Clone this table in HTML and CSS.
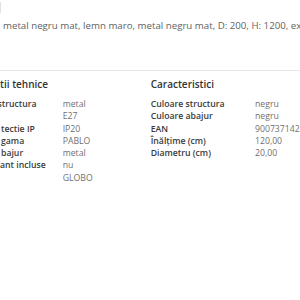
FILE: index.html
```html
<!DOCTYPE html>
<html lang="ro">
<head>
<meta charset="utf-8">
<link rel="stylesheet" href="styles.css">
</head>
<body>
<div class="top">
  <span class="edge"></span>
  <p class="desc">metal negru mat, lemn maro, metal negru mat, D: 200, H: 1200, exterior</p>
</div>
<div class="specs">
  <section class="col col-left">
    <h3 class="title title-cut">tii tehnice</h3>
    <dl class="table table-left">
      <dt class="cut">structura</dt><dd>metal</dd>
      <dt></dt><dd>E27</dd>
      <dt>tectie IP</dt><dd>IP20</dd>
      <dt>gama</dt><dd>PABLO</dd>
      <dt>bajur</dt><dd>metal</dd>
      <dt class="cut-small">ant incluse</dt><dd>nu</dd>
      <dt></dt><dd>GLOBO</dd>
    </dl>
  </section>
  <section class="col col-right">
    <h3 class="title">Caracteristici</h3>
    <dl class="table table-right">
      <dt>Culoare structura</dt><dd>negru</dd>
      <dt>Culoare abajur</dt><dd>negru</dd>
      <dt>EAN</dt><dd>9007371420558</dd>
      <dt>Înălțime (cm)</dt><dd>120,00</dd>
      <dt>Diametru (cm)</dt><dd>20,00</dd>
    </dl>
  </section>
</div>
</body>
</html>
```
FILE: styles.css
```css
html, body {
  margin: 0;
  padding: 0;
  background: #fff;
  overflow: hidden;
}
body {
  font-family: "Open Sans", "Noto Sans", sans-serif;
  width: 300px;
  height: 300px;
  overflow: hidden;
}
.top {
  position: relative;
  height: 70px;
  border-bottom: 1px solid #e8e8e8;
}
.edge {
  position: absolute;
  left: 0;
  top: 2px;
  height: 11px;
  border-left: 1px solid #e2e2e2;
}
.desc {
  margin: 0;
  padding: 19px 0 0 3px;
  font-size: 9.7px;
  line-height: 14px;
  color: #5f5f5f;
  white-space: nowrap;
}
.specs {
  display: flex;
  padding-top: 6px;
  overflow: hidden;
}
.col {
  flex: none;
  min-width: 0;
}
.col-left {
  width: 149.7px;
  margin-left: 1px;
}
.col-right {
  width: 149.3px;
}
.title {
  margin: 0 0 7px;
  font-size: 10px;
  font-weight: 600;
  line-height: 14px;
  color: #333;
  white-space: nowrap;
}
.title-cut {
  margin-left: -1px;
}
.table {
  display: grid;
  margin: 0;
  font-size: 8.7px;
  line-height: 12.3px;
  white-space: nowrap;
}
.table-left {
  grid-template-columns: 61.7px auto;
}
.table-right {
  grid-template-columns: 104.3px auto;
}
.table dt {
  font-weight: 600;
  color: #3a3a3a;
}
.table dt.cut {
  margin-left: -3.5px;
}
.table dt.cut-small {
  margin-left: -1px;
}
.table dd {
  margin: 0;
  color: #707070;
}
```
